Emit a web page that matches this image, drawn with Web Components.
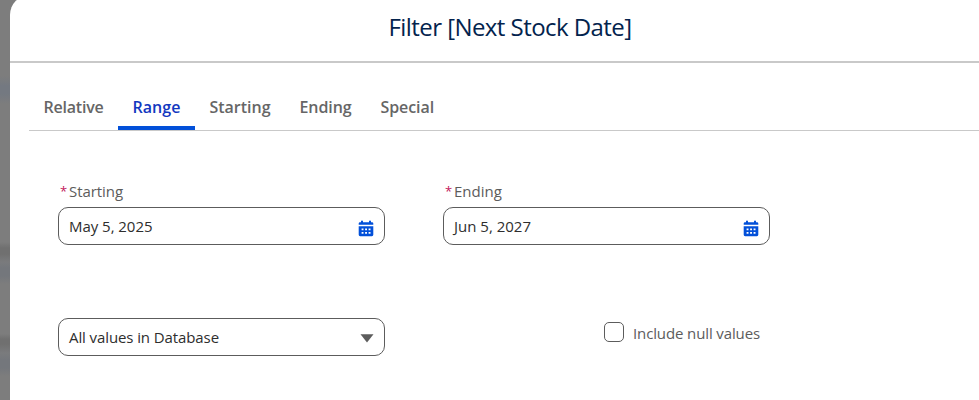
<!DOCTYPE html>
<html lang="en">
<head>
<meta charset="utf-8">
<title>Filter [Next Stock Date]</title>
<style>
html,body{margin:0;height:100%;overflow:hidden}
body{font-family:"Open Sans","Noto Sans",sans-serif;font-size:15px;color:#5c5c5c;background:#7d7d7d}
</style>
</head>
<body>
<filter-dialog>
  <fit-text slot="title" w="243">Filter [Next Stock Date]</fit-text>
  <tab-bar slot="tabs">
    <tab-item><fit-text w="60">Relative</fit-text></tab-item>
    <tab-item active><fit-text w="48">Range</fit-text></tab-item>
    <tab-item><fit-text w="61">Starting</fit-text></tab-item>
    <tab-item><fit-text w="52">Ending</fit-text></tab-item>
    <tab-item><fit-text w="53.5">Special</fit-text></tab-item>
  </tab-bar>
  <form-grid>
    <date-field><fit-text slot="label" w="54">Starting</fit-text><fit-text w="83.5">May 5, 2025</fit-text></date-field>
    <date-field><fit-text slot="label" w="48">Ending</fit-text><fit-text w="77">Jun 5, 2027</fit-text></date-field>
    <select-field><fit-text w="150">All values in Database</fit-text></select-field>
    <check-field><fit-text w="127">Include null values</fit-text></check-field>
  </form-grid>
</filter-dialog>
<script>
function define(name, markup, extra) {
  const t = document.createElement('template');
  t.innerHTML = markup;
  customElements.define(name, class extends HTMLElement {
    constructor() {
      super();
      this.attachShadow({ mode: 'open' }).append(t.content.cloneNode(true));
    }
    connectedCallback() { if (extra) extra(this); }
  });
}

define('filter-dialog', `<style>
:host{display:flow-root;box-sizing:border-box;height:100vh;overflow:hidden;padding-left:10px;
 background:linear-gradient(#7d7d7d 0 76px,#747981 86px 94px,#7d7d7d 104px 242px,#707070 248px 254px,#7a7b7d 262px,#74777c 268px 276px,#7d7d7d 284px 334px,#707070 339px 344px,#7a7b7d 353px,#74777c 360px 368px,#7d7d7d 376px)}
.panel{height:100%;background:#fff;border-top-left-radius:20px;margin-top:-5px;padding-top:5px}
header{box-sizing:border-box;height:63px;border-bottom:2px solid #c9c9c9;display:flex;justify-content:center;padding:10px 0 0 31px;font-size:24px;line-height:34px;color:#03234d}
.tabs{padding:21px 0 0 19px}
</style><div class="panel"><header><slot name="title"></slot></header><div class="tabs"><slot name="tabs"></slot></div><slot></slot></div>`);

define('tab-bar', `<style>
:host{display:flex;height:46px;border-bottom:1px solid #c9c9c9}
</style><slot></slot>`);

define('tab-item', `<style>
:host{display:block;box-sizing:border-box;padding:10px 14.5px 0 14.5px;line-height:26px;font-size:16px;font-weight:600;height:46px;color:#666}
:host([active]){color:#1238c0;border-bottom:4px solid #0250d9}
</style><slot></slot>`);

define('form-grid', `<style>
:host{display:grid;grid-template-columns:327px 327px;column-gap:58px;grid-template-rows:64px 38px;row-gap:73px;padding:50px 0 0 48px}
</style><slot></slot>`);

const box = `.box{box-sizing:border-box;height:38px;border:1px solid #5c5c5c;border-radius:10px;display:flex;align-items:center;justify-content:space-between;padding:0 10px;color:#2e2e2e;line-height:36px}`;

define('date-field', `<style>
:host{display:block}
.label{display:flex;height:26px;line-height:21px;gap:2px;padding-left:2px}
.star{color:#c2185b;width:7px;font-size:13px}
${box}
svg{display:block;margin-top:4px}
</style><div class="label"><span class="star">*</span><slot name="label"></slot></div>
<div class="box"><slot></slot><svg width="16" height="17" viewBox="0 0 16 17"><path fill="#0250d9" fill-rule="evenodd" d="M3 1.6Q3 .6 4 .6T5 1.6V2.3H11V1.6Q11 .6 12 .6T13 1.6V2.3H14Q15.3 2.3 15.3 3.6V4.7H.7V3.6Q.7 2.3 2 2.3H3ZM.7 6.2H15.3V14.8Q15.3 16.2 13.9 16.2H2.1Q.7 16.2.7 14.8ZM3.6 8.5V10.3H5.5V8.5ZM7.1 8.5V10.3H9V8.5ZM10.6 8.5V10.3H12.5V8.5ZM3.6 12V13.8H5.5V12ZM7.1 12V13.8H9V12ZM10.6 12V13.8H12.5V12Z"/></svg></div>`);

define('select-field', `<style>
:host{display:block}
${box}
svg{display:block;margin-top:3px}
</style><div class="box"><slot></slot><svg width="14" height="9" viewBox="0 0 14 9"><path fill="#5c5c5c" d="M.5.3H13.5L7 8.6Z"/></svg></div>`);

define('check-field', `<style>
:host{display:flex;gap:9px;justify-content:flex-end;padding:4px 10px 0 0;line-height:22px}
.check{box-sizing:border-box;width:20px;height:20px;border:1px solid #5c5c5c;border-radius:5px}
</style><span class="check"></span><slot></slot>`);

/* Tracks a single line of text so that it fills the given width. */
define('fit-text', `<style>:host{display:block;white-space:nowrap}span{display:inline-block}</style><span><slot></slot></span>`, el => {
  const span = el.shadowRoot.querySelector('span');
  const w = +el.getAttribute('w');
  span.style.letterSpacing = '0';
  span.style.letterSpacing = (w - span.getBoundingClientRect().width) / el.textContent.length + 'px';
  el.style.width = w + 'px';
});
</script>
</body>
</html>
